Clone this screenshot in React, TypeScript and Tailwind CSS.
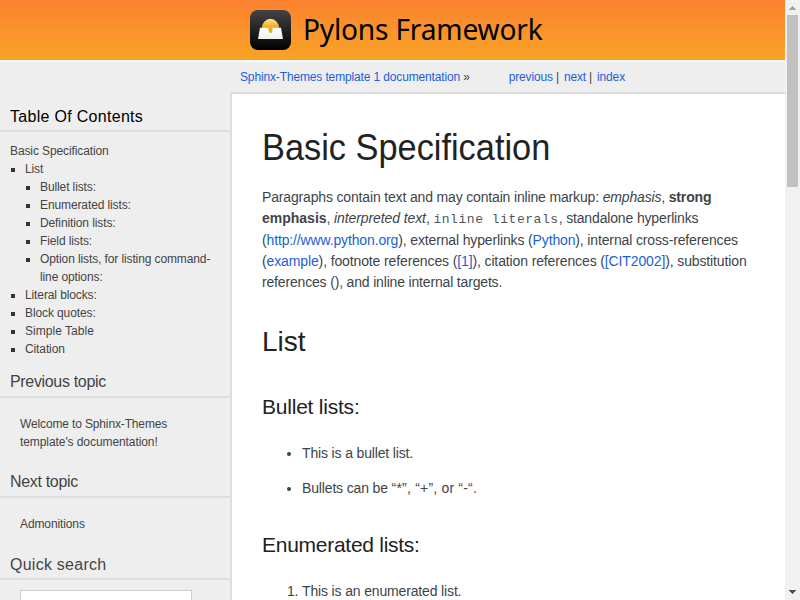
import type { ReactNode } from "react";

const link = "text-[#1b61d6]";

function SideHeading({ children, className = "" }: { children: ReactNode; className?: string }) {
  return (
    <h3 className={`border-b-2 border-[#ddd] pl-[10px] text-[16px] leading-[20px] whitespace-nowrap ${className}`}>
      {children}
    </h3>
  );
}

function TocItem({ children, nested = false }: { children: ReactNode; nested?: boolean }) {
  return (
    <li className={`flex items-start ${nested ? "ml-[15px]" : ""}`}>
      <span className="mt-[8px] ml-[1px] mr-[10px] h-[4px] w-[4px] shrink-0 bg-[#333]" />
      <span className="whitespace-nowrap">{children}</span>
    </li>
  );
}

function Logo() {
  return (
    <svg width="41" height="40" viewBox="0 0 41 40" className="shrink-0">
      <defs>
        <linearGradient id="tile" x1="0" y1="0" x2="0" y2="1">
          <stop offset="0" stopColor="#444" />
          <stop offset="1" stopColor="#000" />
        </linearGradient>
        <linearGradient id="sun" x1="0" y1="0" x2="0" y2="1">
          <stop offset="0" stopColor="#ffe18a" />
          <stop offset="0.6" stopColor="#f3bb40" />
          <stop offset="1" stopColor="#e99b17" />
        </linearGradient>
        <linearGradient id="base" x1="0" y1="0" x2="0" y2="1">
          <stop offset="0" stopColor="#fff" />
          <stop offset="1" stopColor="#f0f0f0" />
        </linearGradient>
      </defs>
      <rect width="41" height="40" rx="8" fill="url(#tile)" />
      <path d="M11.7 18.5a8.8 9.7 0 0 1 17.6 0z" fill="url(#sun)" />
      <path d="M10 17.8h21l2 11.3H8z" fill="url(#base)" />
      <path d="M18.3 17.8h4.4l-.7 5h-3z" fill="#efaa25" />
    </svg>
  );
}

export default function App() {
  return (
    <div className="flex h-[600px] w-[800px] overflow-hidden bg-white font-['Liberation_Sans',Arial,sans-serif] text-[#444]">
      <div className="flex w-[785px] flex-col">
        <header className="flex h-[60px] shrink-0 items-center bg-linear-to-b from-[#fb8130] to-[#f8a425] pl-[250px]">
          <Logo />
          <span className="mb-[2px] ml-[12px] origin-left scale-x-[0.97] font-['Noto_Sans',sans-serif] text-[29px] leading-[40px] tracking-[-0.2px] whitespace-nowrap text-black">
            Pylons Framework
          </span>
        </header>
        <div className="mt-[2px] flex min-h-0 flex-1 bg-[#eee]">
          <aside className="w-[230px] shrink-0 text-[12px] leading-[18px] tracking-[-0.11px]">
            <SideHeading className="mt-[45px] h-[25px] tracking-[0.3px] text-black">Table Of Contents</SideHeading>
            <p className="mt-[10px] ml-[10px]">Basic Specification</p>
            <ul className="ml-[10px]">
              <TocItem>List</TocItem>
              <TocItem nested>Bullet lists:</TocItem>
              <TocItem nested>Enumerated lists:</TocItem>
              <TocItem nested>Definition lists:</TocItem>
              <TocItem nested>Field lists:</TocItem>
              <TocItem nested>
                Option lists, for listing command-
                <br />
                line options:
              </TocItem>
              <TocItem>Literal blocks:</TocItem>
              <TocItem>Block quotes:</TocItem>
              <TocItem>
                <span className="tracking-[0.03px]">Simple Table</span>
              </TocItem>
              <TocItem>Citation</TocItem>
            </ul>
            <SideHeading className="mt-[14px] h-[26px] tracking-[-0.33px]">Previous topic</SideHeading>
            <p className="mt-[17px] ml-[20px]">
              <span className="tracking-[-0.14px]">Welcome to Sphinx-Themes</span>
              <br />
              <span className="tracking-[-0.08px]">template's documentation!</span>
            </p>
            <SideHeading className="mt-[21px] h-[26px] tracking-[-0.33px]">Next topic</SideHeading>
            <p className="mt-[17px] ml-[20px]">Admonitions</p>
            <SideHeading className="mt-[22px] h-[25px] tracking-[0.25px]">Quick search</SideHeading>
            <div className="mt-[10px] ml-[20px] h-[24px] w-[172px] border border-[#ccc] bg-white" />
          </aside>
          <div className="flex min-w-0 flex-1 flex-col">
            <nav className="flex h-[30px] shrink-0 items-center pl-[10px] text-[12px] leading-[18px] tracking-[-0.14px] whitespace-pre">
              <span className={link}>Sphinx-Themes template 1 documentation</span>
              <span className="ml-[3px]">»</span>
              <span className={`ml-[39px] ${link}`}>previous</span>
              <span className="ml-[3px]">|</span>
              <span className={`ml-[5px] ${link}`}>next</span>
              <span className="ml-[3px]">|</span>
              <span className={`ml-[5px] ${link}`}>index</span>
            </nav>
            <main className="min-h-0 flex-1 overflow-hidden border-t-2 border-l-2 border-[#ddd] bg-white pl-[30px] text-[14px] leading-[21.3px] tracking-[-0.15px] whitespace-nowrap text-[#3e4349]">
              <h1 className="mt-[32px] origin-left scale-x-[0.954] text-[36px] leading-[44px] tracking-normal text-[#222]">Basic Specification</h1>
              <div className="mt-[17px]">
                <p className="tracking-[-0.16px]">
                  Paragraphs contain text and may contain inline markup: <em>emphasis</em>, <strong>strong</strong>
                </p>
                <p>
                  <strong className="tracking-normal">emphasis</strong>, <em className="tracking-[-0.1px]">interpreted text</em>,{" "}
                  <code className="font-['Liberation_Mono',monospace] text-[13px] leading-none tracking-[0.55px] text-[#555]">inline literals</code>, standalone
                  hyperlinks
                </p>
                <p className="tracking-[-0.14px]">
                  (<a className={link}>http://www.python.org</a>), external hyperlinks (<a className={link}>Python</a>), internal
                  cross-references
                </p>
                <p className="tracking-[-0.125px]">
                  (<a className={link}>example</a>), footnote references (<a className={link}>[1]</a>), citation references (
                  <a className={link}>[CIT2002]</a>), substitution
                </p>
                <p className="tracking-[-0.17px]">references (), and inline internal targets.</p>
              </div>
              <h2 className="mt-[32px] text-[28px] leading-[34px] tracking-normal text-[#222]">List</h2>
              <h3 className="mt-[34px] text-[21px] leading-[28px] tracking-[-0.22px] text-[#222]">Bullet lists:</h3>
              <ul className="mt-[22px] ml-[40px] list-disc">
                <li>This is a bullet list.</li>
                <li className="mt-[13.5px]">
                  Bullets can be <span className="tracking-[0.2px]">“*”, “+”, or “-“.</span>
                </li>
              </ul>
              <h3 className="mt-[31.5px] text-[21px] leading-[28px] tracking-[-0.27px] text-[#222]">Enumerated lists:</h3>
              <ol className="mt-[22px] ml-[40px] list-decimal">
                <li>This is an enumerated list.</li>
              </ol>
            </main>
          </div>
        </div>
      </div>
      <div className="flex w-[15px] flex-col items-center bg-[#f1f1f1]">
        <svg width="15" height="15" shapeRendering="crispEdges">
          <path d="M4 10h7v-1h-1v-1h-1v-1h-1v-1h-1v1h-1v1h-1v1h-1z" fill="#a3a3a3" />
        </svg>
        <div className="h-[172px] w-[11px] bg-[#c1c1c1]" />
        <svg width="15" height="15" shapeRendering="crispEdges" className="mt-auto">
          <path d="M4 5h7v1h-1v1h-1v1h-1v1h-1v-1h-1v-1h-1v-1h-1z" fill="#505050" />
        </svg>
      </div>
    </div>
  );
}
